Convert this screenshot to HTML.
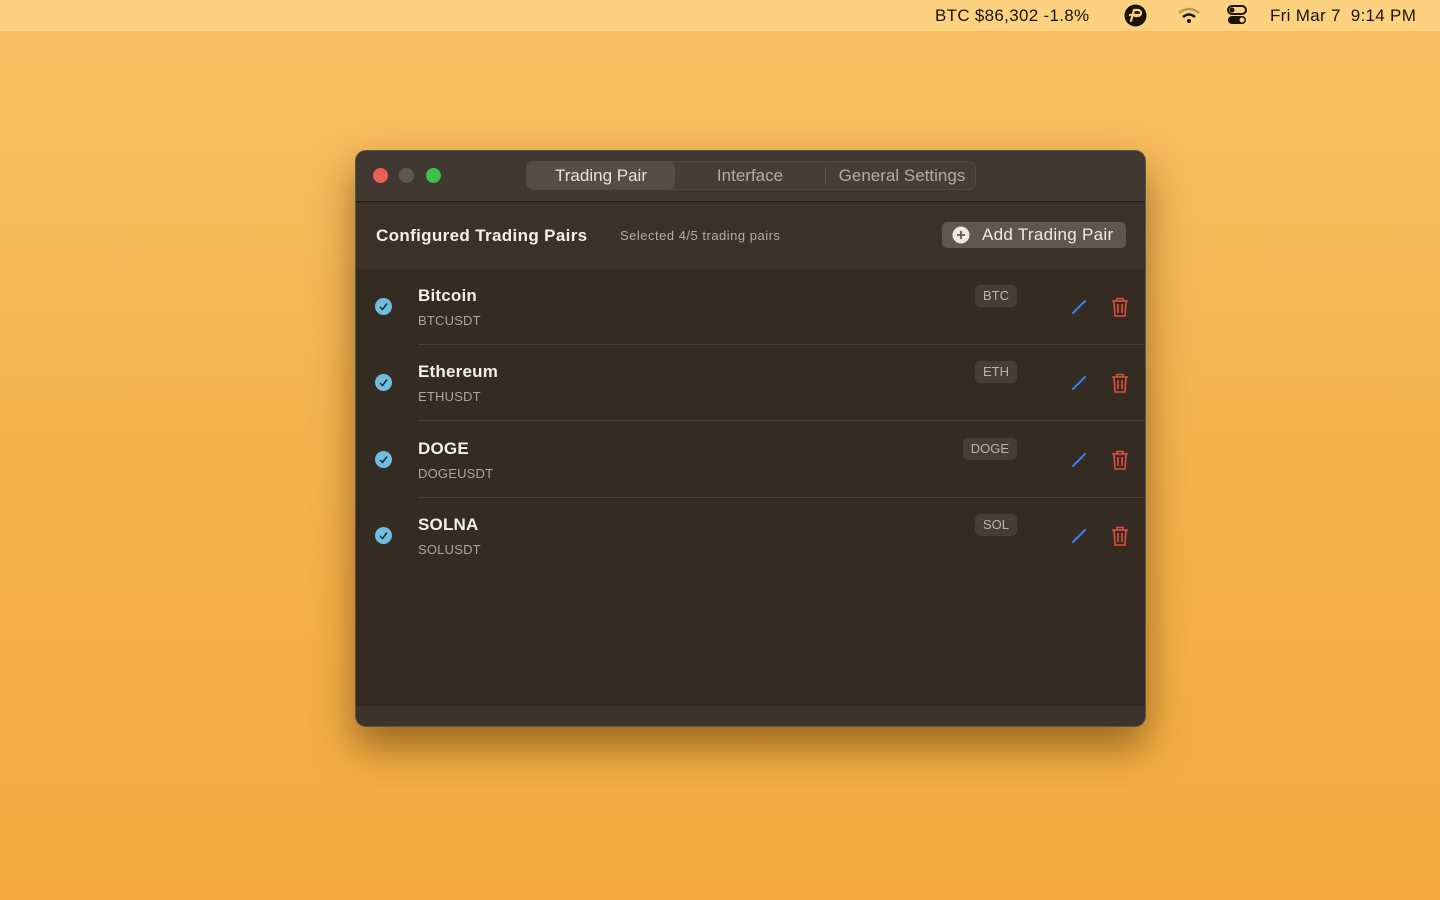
<!DOCTYPE html>
<html><head><style>
*{margin:0;padding:0;box-sizing:border-box}
body{width:1440px;height:900px;overflow:hidden;background:linear-gradient(180deg,#f8c063 0%,#f4b04a 60%,#f3ab40 100%);font-family:"Liberation Sans",sans-serif;position:relative}
.menubar{position:absolute;left:0;top:0;width:1440px;height:31px;background:#fcd281;color:#1c1406;font-size:17px;letter-spacing:.3px}
.menubar span{position:absolute;top:6px}
.win{position:absolute;left:355px;top:150px;width:791px;height:577px;background:#342b23;border-radius:11px;border:1px solid #5c544a;box-shadow:0 20px 40px rgba(80,45,0,.55);overflow:hidden}
.title{position:absolute;left:0;top:0;width:100%;height:51px;background:#3f3730;border-bottom:1px solid #241d17}
.dot{position:absolute;top:17px;width:15px;height:15px;border-radius:50%}
.seg{position:absolute;left:170px;top:10px;width:450px;height:29px;border-radius:7px;background:#463e36;border:1px solid #524a41}
.seg div{position:absolute;top:0;height:27px;line-height:27px;text-align:center;color:#b5aca1;font-size:17px}
.hdr{position:absolute;left:0;top:52px;width:100%;height:66px;background:#3b3129}
.row{position:absolute;left:0;width:100%;height:76px}
.row .chk{position:absolute;left:19px;top:29px;width:17px;height:17px;border-radius:50%;background:#6fbddf}
.row .nm{position:absolute;left:62px;top:17px;color:#f4efe8;font-size:17px;font-weight:bold;letter-spacing:.2px}
.row .sym{position:absolute;left:62px;top:44px;color:#aea59a;font-size:13px;letter-spacing:.2px}
.row .tag{position:absolute;top:16px;height:22px;line-height:22px;padding:0 8px;background:#463d35;border-radius:5px;color:#bdb4a9;font-size:13px;right:128px}
.row .sep{position:absolute;left:62px;right:0;bottom:0;height:1px;background:#4a4138}
.ed{position:absolute;left:715px;top:30px}
.tr{position:absolute;left:755px;top:28px}
.foot{position:absolute;left:0;bottom:0;width:100%;height:20px;background:#3c332b}
</style></head><body>
<div class="menubar">
<span style="left:935px">BTC $86,302 -1.8%</span>
<svg style="position:absolute;left:1124px;top:4px" width="23" height="23" viewBox="0 0 23 23"><circle cx="11.5" cy="11.5" r="11" fill="#1c1406"/><path d="M7 17 L10 6 M6 11 H16 M10 6 H14 a3 3 0 0 1 0 6 H11" stroke="#fcd281" stroke-width="2.2" fill="none" stroke-linecap="round"/></svg>
<svg style="position:absolute;left:1177px;top:7px" width="24" height="18" viewBox="0 0 24 18"><path d="M2 6 Q12 -2 22 6" stroke="#b8975a" stroke-width="2.5" fill="none"/><path d="M6 10 Q12 5 18 10" stroke="#1c1406" stroke-width="2.5" fill="none"/><circle cx="12" cy="14" r="2" fill="#1c1406"/></svg>
<svg style="position:absolute;left:1227px;top:5px" width="20" height="20" viewBox="0 0 20 20"><rect x="1" y="1" width="18" height="8" rx="4" fill="none" stroke="#1c1406" stroke-width="2"/><circle cx="5" cy="5" r="2.5" fill="#1c1406"/><rect x="1" y="11" width="18" height="8" rx="4" fill="#1c1406"/><circle cx="15" cy="15" r="2.5" fill="#fcd281"/></svg>
<span style="left:1270px">Fri Mar 7&nbsp; 9:14 PM</span>
</div>
<div class="win">
<div class="title">
<div class="dot" style="left:17px;background:#ec5f56"></div>
<div class="dot" style="left:43px;background:#5e5852"></div>
<div class="dot" style="left:70px;background:#3fc04c"></div>
<div class="seg">
<div style="left:0;width:148px;background:#564d44;border-radius:6px;color:#e8e2da">Trading Pair</div>
<div style="left:148px;width:150px">Interface</div>
<div style="left:298px;width:1px;top:5px;height:17px;background:#5e564c"></div>
<div style="left:300px;width:150px">General Settings</div>
</div>
</div>
<div class="hdr">
<div style="position:absolute;left:20px;top:23px;color:#f4efe8;font-size:17px;font-weight:bold;letter-spacing:.35px">Configured Trading Pairs</div>
<div style="position:absolute;left:264px;top:25px;color:#b5aca1;font-size:13px;letter-spacing:.5px">Selected 4/5 trading pairs</div>
<div style="position:absolute;left:586px;top:19px;width:184px;height:26px;background:#5f564d;border-radius:5px;color:#f0ebe4;font-size:17px;line-height:26px;padding-left:40px;letter-spacing:.3px">Add Trading Pair
<svg style="position:absolute;left:10px;top:4px" width="18" height="18" viewBox="0 0 18 18"><circle cx="9" cy="9" r="8.5" fill="#eee8e0"/><path d="M9 5V13M5 9H13" stroke="#5f564d" stroke-width="1.8"/></svg></div>
</div>
<div class="row" style="top:118px"><div class="chk"><svg width="17" height="17"><path d="M5 9 L7.5 11.5 L12 5.5" stroke="#1c2a33" stroke-width="1.5" fill="none"/></svg></div><div class="nm">Bitcoin</div><div class="sym">BTCUSDT</div><div class="tag">BTC</div><div class="sep"></div>
<svg class="ed" width="16" height="16"><path d="M2 14 L14 2" stroke="#3a7ff0" stroke-width="2" stroke-linecap="round"/></svg>
<svg class="tr" width="18" height="20" viewBox="0 0 18 20"><path d="M1 4H17M6 4V1.5H12V4M3 4L4 19H14L15 4M7 7V16M11 7V16" stroke="#e0503c" stroke-width="1.6" fill="none"/></svg></div>
<div class="row" style="top:194px"><div class="chk"><svg width="17" height="17"><path d="M5 9 L7.5 11.5 L12 5.5" stroke="#1c2a33" stroke-width="1.5" fill="none"/></svg></div><div class="nm">Ethereum</div><div class="sym">ETHUSDT</div><div class="tag">ETH</div><div class="sep"></div>
<svg class="ed" width="16" height="16"><path d="M2 14 L14 2" stroke="#3a7ff0" stroke-width="2" stroke-linecap="round"/></svg>
<svg class="tr" width="18" height="20" viewBox="0 0 18 20"><path d="M1 4H17M6 4V1.5H12V4M3 4L4 19H14L15 4M7 7V16M11 7V16" stroke="#e0503c" stroke-width="1.6" fill="none"/></svg></div>
<div class="row" style="top:271px"><div class="chk"><svg width="17" height="17"><path d="M5 9 L7.5 11.5 L12 5.5" stroke="#1c2a33" stroke-width="1.5" fill="none"/></svg></div><div class="nm">DOGE</div><div class="sym">DOGEUSDT</div><div class="tag">DOGE</div><div class="sep"></div>
<svg class="ed" width="16" height="16"><path d="M2 14 L14 2" stroke="#3a7ff0" stroke-width="2" stroke-linecap="round"/></svg>
<svg class="tr" width="18" height="20" viewBox="0 0 18 20"><path d="M1 4H17M6 4V1.5H12V4M3 4L4 19H14L15 4M7 7V16M11 7V16" stroke="#e0503c" stroke-width="1.6" fill="none"/></svg></div>
<div class="row" style="top:347px"><div class="chk"><svg width="17" height="17"><path d="M5 9 L7.5 11.5 L12 5.5" stroke="#1c2a33" stroke-width="1.5" fill="none"/></svg></div><div class="nm">SOLNA</div><div class="sym">SOLUSDT</div><div class="tag">SOL</div>
<svg class="ed" width="16" height="16"><path d="M2 14 L14 2" stroke="#3a7ff0" stroke-width="2" stroke-linecap="round"/></svg>
<svg class="tr" width="18" height="20" viewBox="0 0 18 20"><path d="M1 4H17M6 4V1.5H12V4M3 4L4 19H14L15 4M7 7V16M11 7V16" stroke="#e0503c" stroke-width="1.6" fill="none"/></svg></div>
<div class="foot"></div>
</div>
</body></html>
